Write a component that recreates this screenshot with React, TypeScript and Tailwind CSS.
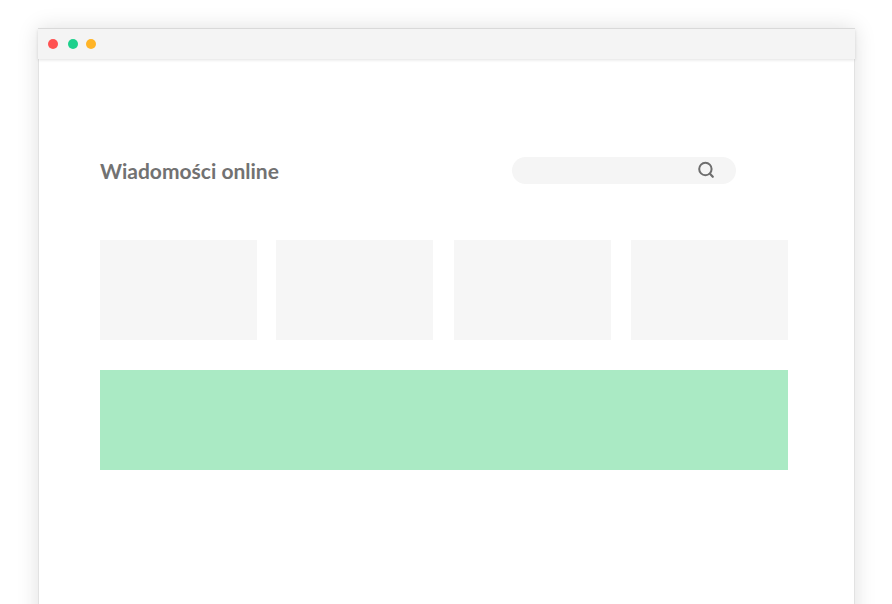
import React from "react";

export default function App() {
  return (
    <div className="h-[604px] w-[892px] overflow-hidden bg-white pt-[28px] pl-[38px] font-['Lato',sans-serif] antialiased">
      <div className="h-[640px] w-[817px] border-t border-[#dedede] bg-white shadow-[0_0_20px_rgba(0,0,0,0.13)]">
        <div className="relative flex h-[30px] items-center gap-[8px] bg-[#f4f4f4] pl-[10px] shadow-[0_1px_3px_rgba(0,0,0,0.12)]">
          <span className="h-[10px] w-[10px] rounded-full bg-[#ff5252]" />
          <span className="ml-[2px] h-[10px] w-[10px] rounded-full bg-[#1dd08c]" />
          <span className="h-[10px] w-[10px] rounded-full bg-[#ffb427]" />
        </div>
        <div className="h-[609px] border-x border-[#e2e2e2] pl-[61px] pt-[98px]">
          <div className="flex h-[27px] items-center">
            <h1 className="w-[412px] text-[21px] leading-[27px] font-bold whitespace-nowrap text-[#727272]">Wiadomości online</h1>
            <div className="flex h-[27px] w-[224px] items-center rounded-full bg-[#f5f5f5] pl-[185px]">
              <svg className="mb-[1px]" width="18" height="18" viewBox="0 0 18 18" fill="none" stroke="#6e6e6e" strokeLinecap="round">
                <circle cx="8.4" cy="8" r="6.2" strokeWidth="2" />
                <path d="M13.2 13 L15.8 15.8" strokeWidth="2.2" />
              </svg>
            </div>
          </div>
          <div className="mt-[56px] flex w-[688px]">
            <div className="h-[100px] w-[157px] bg-[#f6f6f6]" />
            <div className="ml-[19px] h-[100px] w-[157px] bg-[#f6f6f6]" />
            <div className="ml-[21px] h-[100px] w-[157px] bg-[#f6f6f6]" />
            <div className="ml-[20px] h-[100px] w-[157px] bg-[#f6f6f6]" />
          </div>
          <div className="mt-[30px] h-[100px] w-[688px] bg-[#aaeac4]" />
        </div>
      </div>
    </div>
  );
}
